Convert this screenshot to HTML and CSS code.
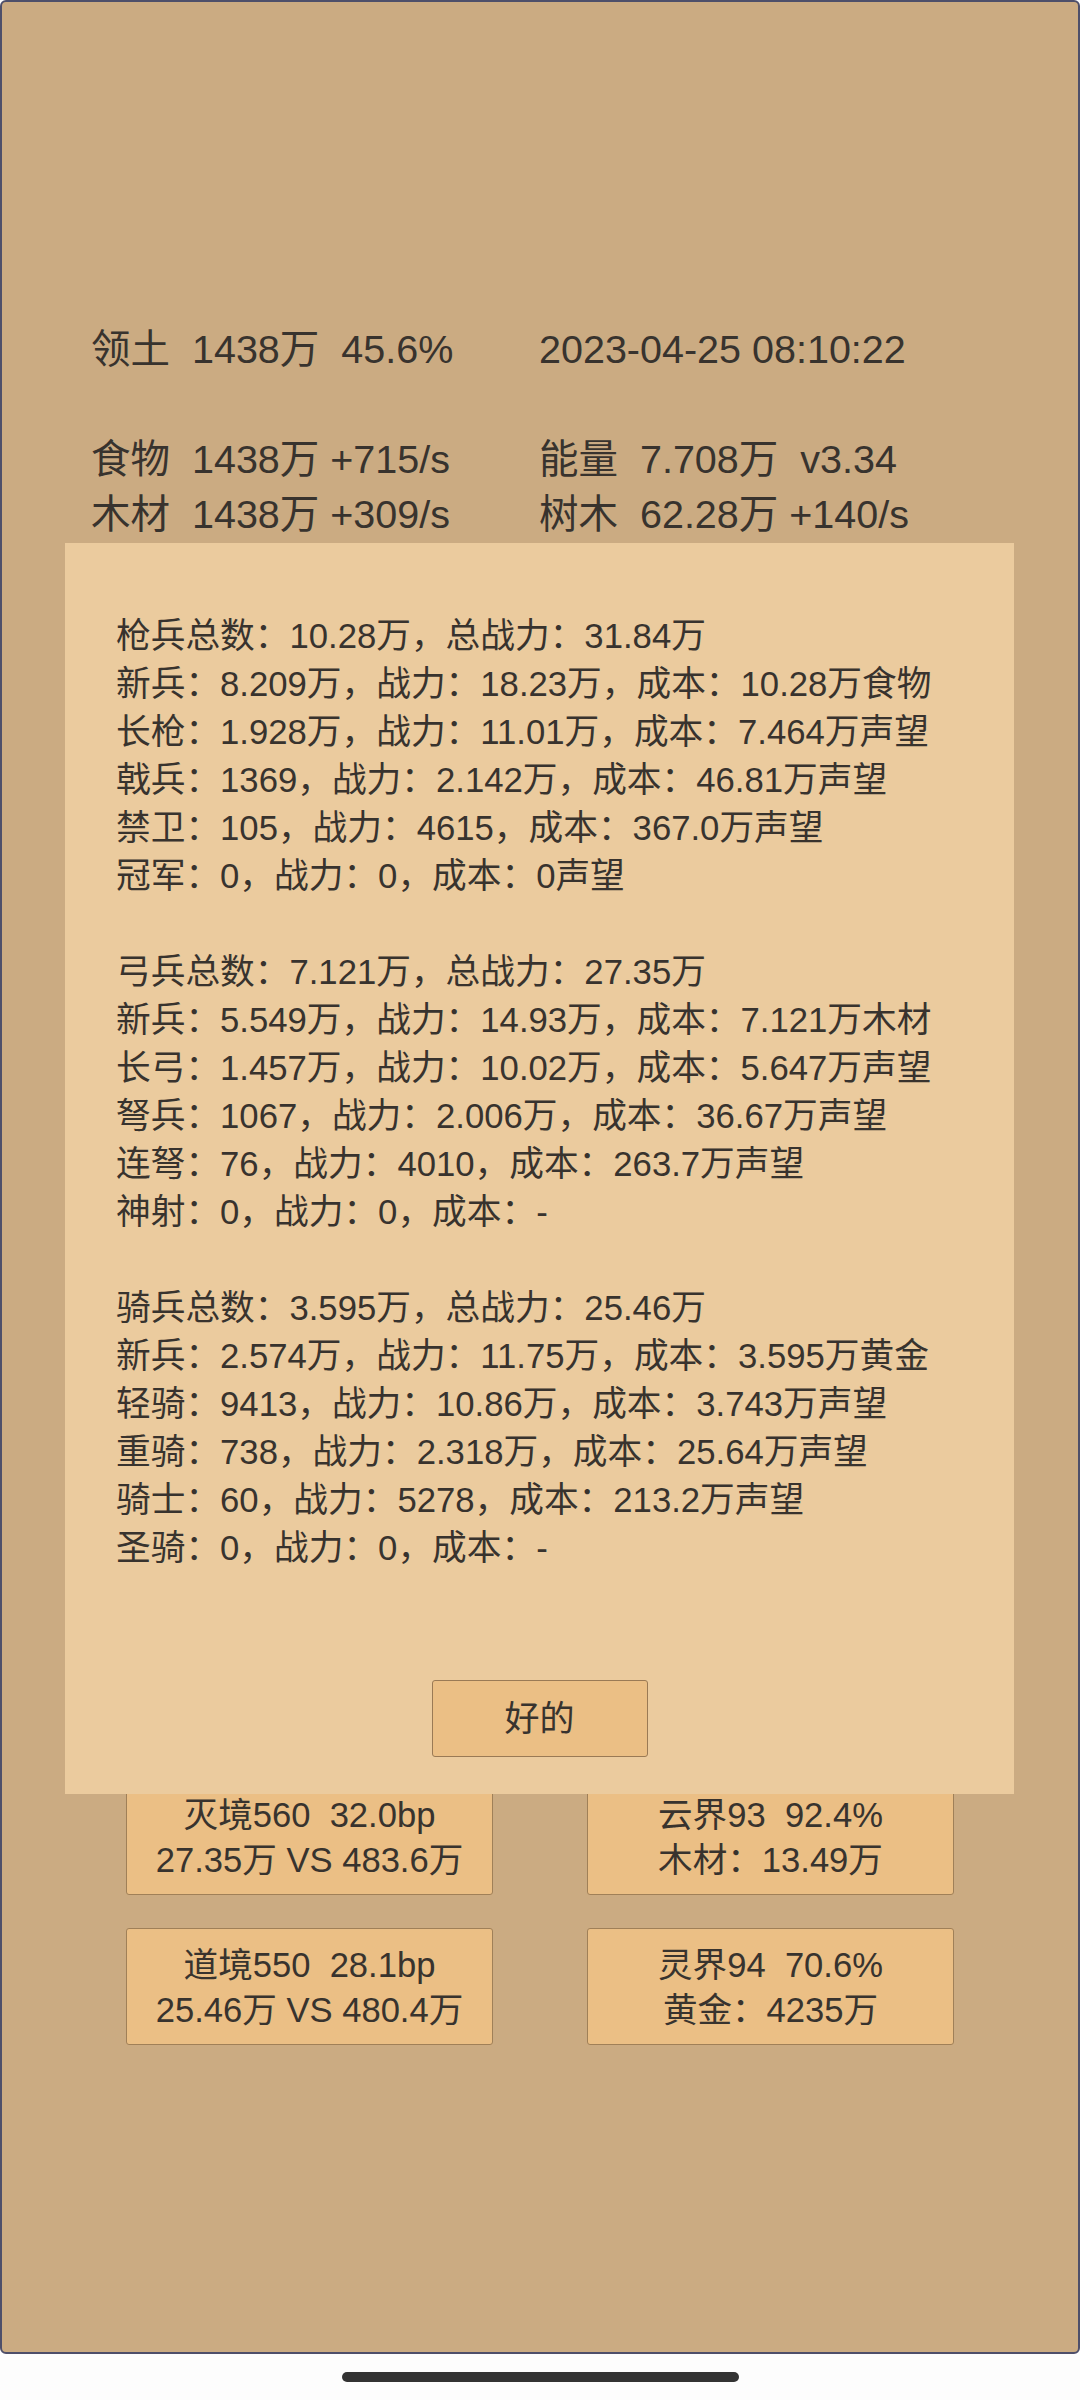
FILE: index.html
```html
<!DOCTYPE html>
<html lang="zh-CN">
<head>
<meta charset="utf-8">
<title>领土</title>
<link rel="stylesheet" href="styles.css">
</head>
<body>
<div class="screen">
  <div class="stats">
    <div class="cell">领土&nbsp;&nbsp;1438万&nbsp;&nbsp;45.6%</div>
    <div class="cell">2023-04-25 08:10:22</div>
    <div class="cell empty"></div>
    <div class="cell empty"></div>
    <div class="cell">食物&nbsp;&nbsp;1438万 +715/s</div>
    <div class="cell">能量&nbsp;&nbsp;7.708万&nbsp;&nbsp;v3.34</div>
    <div class="cell">木材&nbsp;&nbsp;1438万 +309/s</div>
    <div class="cell">树木&nbsp;&nbsp;62.28万 +140/s</div>
  </div>

  <div class="cards">
    <div class="card"><div>灭境560&nbsp;&nbsp;32.0bp</div><div>27.35万 VS 483.6万</div></div>
    <div class="card"><div>云界93&nbsp;&nbsp;92.4%</div><div>木材：13.49万</div></div>
    <div class="card"><div>道境550&nbsp;&nbsp;28.1bp</div><div>25.46万 VS 480.4万</div></div>
    <div class="card"><div>灵界94&nbsp;&nbsp;70.6%</div><div>黄金：4235万</div></div>
  </div>

  <div class="dialog">
    <div class="dialog-text">
      <div class="line">枪兵总数：10.28万，总战力：31.84万</div>
      <div class="line">新兵：8.209万，战力：18.23万，成本：10.28万食物</div>
      <div class="line">长枪：1.928万，战力：11.01万，成本：7.464万声望</div>
      <div class="line">戟兵：1369，战力：2.142万，成本：46.81万声望</div>
      <div class="line">禁卫：105，战力：4615，成本：367.0万声望</div>
      <div class="line">冠军：0，战力：0，成本：0声望</div>
      <div class="line blank"></div>
      <div class="line">弓兵总数：7.121万，总战力：27.35万</div>
      <div class="line">新兵：5.549万，战力：14.93万，成本：7.121万木材</div>
      <div class="line">长弓：1.457万，战力：10.02万，成本：5.647万声望</div>
      <div class="line">弩兵：1067，战力：2.006万，成本：36.67万声望</div>
      <div class="line">连弩：76，战力：4010，成本：263.7万声望</div>
      <div class="line">神射：0，战力：0，成本：-</div>
      <div class="line blank"></div>
      <div class="line">骑兵总数：3.595万，总战力：25.46万</div>
      <div class="line">新兵：2.574万，战力：11.75万，成本：3.595万黄金</div>
      <div class="line">轻骑：9413，战力：10.86万，成本：3.743万声望</div>
      <div class="line">重骑：738，战力：2.318万，成本：25.64万声望</div>
      <div class="line">骑士：60，战力：5278，成本：213.2万声望</div>
      <div class="line">圣骑：0，战力：0，成本：-</div>
    </div>
    <div class="dialog-actions">
      <div class="btn">好的</div>
    </div>
  </div>
</div>
<div class="navbar"><div class="pill"></div></div>
</body>
</html>
```

FILE: styles.css
```css
html, body {
  margin: 0;
  padding: 0;
  background: #fdfdfd;
}
body {
  width: 1080px;
  height: 2400px;
  font-family: "Liberation Sans", "Noto Sans CJK SC", sans-serif;
  color: #38332e;
  overflow: hidden;
}
.screen {
  position: relative;
  box-sizing: border-box;
  width: 1080px;
  height: 2354px;
  background: #cbab82;
  border: 2px solid #4e4f6a;
  border-radius: 6px;
}
.stats {
  display: grid;
  grid-template-columns: 448px 1fr;
  padding: 320px 0 0 89px;
  font-size: 39.5px;
  line-height: 55px;
  white-space: nowrap;
}
.cell.empty {
  height: 55px;
}
.cards {
  display: grid;
  grid-template-columns: 367px 367px;
  column-gap: 94px;
  row-gap: 33px;
  padding-left: 124px;
  margin-top: 1236px;
}
.card {
  box-sizing: border-box;
  height: 117px;
  padding: 14px 0 11px;
  background: #ebbf85;
  border: 1px solid #a08058;
  border-radius: 3px;
  text-align: center;
  font-size: 34.6px;
  line-height: 45px;
  white-space: nowrap;
}
.dialog {
  position: absolute;
  left: 63px;
  top: 541px;
  width: 949px;
  height: 1251px;
  box-sizing: border-box;
  background: #ebcb9e;
  padding: 69px 0 0 51px;
  display: flex;
  flex-direction: column;
}
.dialog-text {
  font-size: 34.7px;
  line-height: 48px;
  white-space: nowrap;
}
.line.blank {
  height: 48px;
}
.dialog-actions {
  display: flex;
  justify-content: center;
  margin-top: 108px;
  margin-left: -51px;
}
.btn {
  box-sizing: border-box;
  width: 216px;
  height: 77px;
  background: #ebbf85;
  border: 1px solid #9a7a55;
  border-radius: 3px;
  font-size: 35px;
  line-height: 75px;
  text-align: center;
}
.navbar {
  height: 46px;
  display: flex;
  justify-content: center;
  padding-top: 18px;
  box-sizing: border-box;
}
.pill {
  width: 397px;
  height: 10px;
  border-radius: 5px;
  background: #333333;
}
```
